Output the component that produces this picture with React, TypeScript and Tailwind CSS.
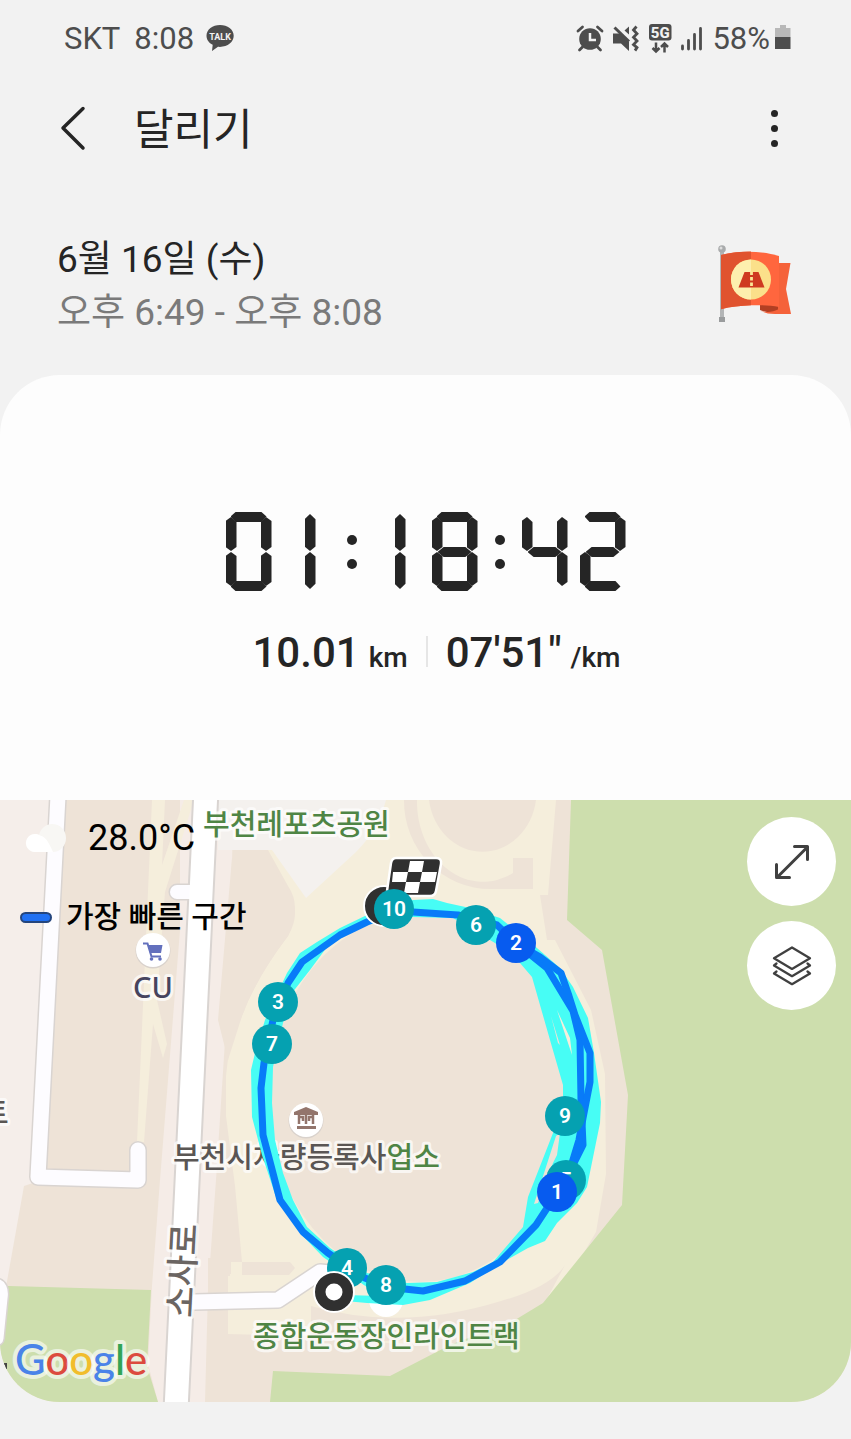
import React from "react";

const SEGMENTS: Record<string, string> = {
  a: "left-[5px] top-0 h-[10px] w-9 [clip-path:polygon(0_45%,14%_0,86%_0,100%_45%,86%_100%,14%_100%)]",
  b: "left-[35px] top-[5px] h-[34px] w-[11px] [clip-path:polygon(50%_0,100%_12%,100%_88%,50%_100%,0_88%,0_15%)]",
  c: "left-[35px] top-10 h-[34px] w-[11px] [clip-path:polygon(50%_0,100%_12%,100%_88%,50%_100%,0_85%,0_12%)]",
  d: "bottom-0 left-[5px] h-[10px] w-9 [clip-path:polygon(0_55%,14%_0,86%_0,100%_55%,86%_100%,14%_100%)]",
  e: "left-0 top-10 h-[34px] w-[11px] [clip-path:polygon(50%_0,100%_12%,100%_85%,50%_100%,0_88%,0_12%)]",
  f: "left-0 top-[5px] h-[34px] w-[11px] [clip-path:polygon(50%_0,100%_15%,100%_88%,50%_100%,0_88%,0_12%)]",
  g: "left-[6px] top-[35px] h-[10px] w-[34px] [clip-path:polygon(0_50%,18%_0,82%_0,100%_50%,82%_100%,18%_100%)]",
  m: "left-[21px] top-[2px] h-[37px] w-[11px] [clip-path:polygon(50%_0,100%_14%,100%_88%,50%_100%,0_88%,0_14%)]",
  n: "left-[21px] top-10 h-[37px] w-[11px] [clip-path:polygon(50%_0,100%_12%,100%_86%,50%_100%,0_86%,0_12%)]",
};

const LIT: Record<string, string> = {
  "0": "abcdef",
  "1": "mn",
  "2": "abged",
  "4": "fgbc",
  "8": "abcdefg",
};

function Digit({ value }: { value: string }) {
  return (
    <span className="relative block h-[79px] w-[46px]">
      {LIT[value].split("").map((s) => (
        <span key={s} className={`absolute bg-[#252525] ${SEGMENTS[s]}`} />
      ))}
    </span>
  );
}

function Colon() {
  return (
    <span className="flex w-11 flex-col items-center gap-[14px]">
      <span className="size-[10px] rounded-full bg-[#252525]" />
      <span className="size-[10px] rounded-full bg-[#252525]" />
    </span>
  );
}

function Timer({ value }: { value: string }) {
  const parts = value.split(":");
  return (
    <div role="timer" aria-label={value} className="flex items-center justify-center">
      {parts.map((p, i) => (
        <React.Fragment key={i}>
          {i > 0 && <Colon />}
          <span className="flex gap-3">
            {p.split("").map((d, j) => (
              <Digit key={j} value={d} />
            ))}
          </span>
        </React.Fragment>
      ))}
    </div>
  );
}

function StatusBar() {
  return (
    <div className="flex h-[78px] items-center justify-between pr-[59px] pl-16 text-[31px] text-[#4d4d4d]">
      <div className="flex items-center">
        <span>SKT</span>
        <span className="ml-[14px]">8:08</span>
        <svg className="ml-3 h-7 w-7" viewBox="0 0 28 28">
          <path d="M14 0C6.500 0 .5 4.500 .5 10.800c0 4 2.500 7.300 6.200 9L6 26l6-4.200c9 .8 15.700-4.500 15.700-11C27.700 4.500 21.500 0 14 0z" fill="#4d4d4d" />
          <text x="14" y="14.500" textAnchor="middle" className="fill-[#f2f2f2] text-[9px] font-bold">TALK</text>
        </svg>
      </div>
      <div className="flex items-center">
        <svg className="h-7 w-7" viewBox="0 0 28 28">
          <circle cx="14" cy="14" r="10.800" fill="#4d4d4d" />
          <path d="M2 6l4.500-4M26 6l-4.500-4M6.500 22l-3 3M21.500 22l3 3" stroke="#4d4d4d" strokeWidth="2.800" strokeLinecap="round" />
          <path d="M14 8v7h6" stroke="#f2f2f2" strokeWidth="2.500" fill="none" />
        </svg>
        <svg className="ml-2 h-7 w-7" viewBox="0 0 28 28">
          <path d="M1 8.500h7L17 17v9l-8-7.500H1zM17 1.500v8L12.500 5.500z" fill="#4d4d4d" />
          <path d="M2.500 2.500L17 16.500" stroke="#4d4d4d" strokeWidth="3" />
          <path d="M24.500 1.500l-3 3.500 3.500 3.700-3.500 3.600 3.500 3.700-3.500 3.600 3.500 3-2 3" stroke="#4d4d4d" strokeWidth="2.800" fill="none" />
        </svg>
        <svg className="ml-2 h-8 w-6" viewBox="0 -3 24 32">
          <rect x="1" y="-2" width="22.500" height="16.500" rx="3" fill="#4d4d4d" />
          <text x="12.200" y="11.500" textAnchor="middle" className="fill-[#f2f2f2] text-[15px] font-extrabold">5G</text>
          <path d="M8 16.500v9M4.500 22L8 25.500l3.500-3.500M16.500 26.500v-9M13 21l3.500-3.500L20 21" stroke="#4d4d4d" strokeWidth="2.500" fill="none" />
        </svg>
        <svg className="ml-2 h-7 w-6" viewBox="0 0 24 28">
          <path d="M2.500 21v3M8.500 15.500V24M14.500 9.500V24M20.500 3.500V24" stroke="#4d4d4d" strokeWidth="2.800" strokeLinecap="round" />
        </svg>
        <span className="ml-2">58%</span>
        <svg className="ml-1 h-7 w-[18px]" viewBox="0 0 18 28">
          <path d="M6 0h6v3h4.500v9H1V3h5z" fill="#b8b8b8" />
          <path d="M1 12h15.500v12H1z" fill="#4d4d4d" />
        </svg>
      </div>
    </div>
  );
}

function FlagBadge() {
  return (
    <svg className="h-[78px] w-[76px]" viewBox="0 0 76 78" role="img" aria-label="거리 목표">
      <rect x="3" y="7" width="4" height="66" fill="#b3b5b6" />
      <circle cx="5" cy="4" r="3.800" fill="#a9abac" />
      <circle cx="4" cy="3" r="1.500" fill="#dedede" />
      <rect x="2" y="72" width="6" height="5" fill="#9a9c9d" />
      <path d="M43 57h19v11c-8 0-14-1-19-3z" fill="#b23f23" />
      <path d="M44 66c6 2 12 1 18-2v5H58c-6 0-10-1-14-3z" fill="#f5623a" />
      <path d="M61 18h12.500l-4.500 26 5 25H61z" fill="#f5623a" />
      <path d="M4 10c17-4.500 40-4.500 58 1v51c-8-1.600-18-2-28-1.800-10 .3-21 1.500-30 4z" fill="#ff663e" />
      <path d="M4 10c10-2.700 20-3.600 30-3.600v53.800c-10 .3-21 1.500-30 4z" fill="#e0532f" />
      <circle cx="34" cy="34.500" r="20" fill="#fbe08a" />
      <path d="M34 14.500a20 20 0 0 0 0 40z" fill="#fdefae" />
      <path d="M27.500 27h14l6 15.500H21.500z" fill="#cf3a20" />
      <path d="M34.500 26.500v16" stroke="#fbe795" strokeWidth="2.800" strokeDasharray="3.500 2" />
    </svg>
  );
}

const MARKERS = [
  { n: "6", x: 476, y: 925, c: "#05a1b1" },
  { n: "2", x: 516, y: 943, c: "#075bef" },
  { n: "3", x: 278, y: 1002, c: "#05a1b1" },
  { n: "7", x: 272, y: 1044, c: "#05a1b1" },
  { n: "9", x: 565, y: 1116, c: "#05a1b1" },
  { n: "5", x: 566, y: 1180, c: "#05a1b1" },
  { n: "1", x: 557, y: 1192, c: "#075bef" },
  { n: "4", x: 347, y: 1268, c: "#05a1b1" },
  { n: "8", x: 386, y: 1285, c: "#05a1b1" },
];

function Marker({ n, x, y, c }: { n: string; x: number; y: number; c: string }) {
  return (
    <g>
      <circle cx={x} cy={y} r="20" fill={c} />
      <text x={x} y={y + 7} textAnchor="middle" className="fill-white text-[21px] font-semibold">{n}</text>
    </g>
  );
}

const labelClass = "font-medium stroke-white/70 stroke-[6px] [paint-order:stroke] [stroke-linejoin:round]";

function RouteMap() {
  return (
    <svg className="block w-full" viewBox="0 800 851 602" role="img" aria-label="달리기 경로 지도">
      <rect y="800" width="851" height="602" fill="#eee3d7" />
      {/* street-side ground */}
      <path d="M0 800h52L36 1182l-12 4L6 1287H0z" fill="#f5eeea" />
      <path d="M180 800h14l-28 602h-8l-10-38 4-78 8-106 20-250z" fill="#f5ece7" />
      <path d="M217 800h17l-7 210-11 170-8 110-3 112h-18z" fill="#f5ece7" />
      {/* footpaths */}
      <path d="M152 800h13l-3 65 22-65h10l-29 92-8 108 10 44-4 14-10-34-9 118h-7z" fill="#f5eedc" />
      {/* stadium grounds */}
      <path d="M232 850h36l20 36q14 20 0 50-32 42-46 80-14 30-16 60v40l9 70 7 76h-12v14h-2v58l80 2 90 8 122-14 42-40 34-58 10-58-1-100-14-64-36-70h-8l-7-45h8l8-95H218v50z" fill="#f5eedc" />
      <path d="M232 858h36l20 34q14 20 0 44-32 42-46 80l-14 44-10-40z" fill="#eee3d7" />
      <path d="M218 800h168q-8 30-30 52l-50 46-34-48h-54z" fill="#f4f1ee" />
      <path d="M404 800h13a66 80 0 0 0 96 73v-15h20v31h-42a86 88 0 0 1-87-89z" fill="#eee3d7" />
      <path d="M429 800h107a54 60 0 0 1-107 0z" fill="#eee3d7" />
      <path d="M242 1262h48l5 6-6 7h-47z" fill="#eee3d7" />
      <path d="M208 1258h23v16h-3v58h-20z" fill="#eee3d7" />
      <path d="M311 1306q90 26 190-5 50-14 64-36l-24 45-40 25-190 10z" fill="#eee3d7" />
      <ellipse cx="420" cy="1098" rx="152" ry="184" fill="#eee3d7" />
      {/* parks */}
      <path d="M571 800h280v602H270l3-31 117 5 60-31 65-25 28-17 79-98 6-110-26-145-35-30z" fill="#cddead" />
      <path d="M9 1286l142 4-4 76 11 36H0v-116z" fill="#cddead" />
      {/* roads */}
      <g fill="none" strokeLinecap="round" strokeLinejoin="round">
        <path d="M58 796L38 1177l100 3v-30" stroke="#d9d4d1" strokeWidth="18" />
        <path d="M177 892h26" stroke="#d9d4d1" strokeWidth="17" />
        <path d="M194 1302l84-2 42-28 30 3" stroke="#d9d4d1" strokeWidth="18" />
        <path d="M206 790L176 1410" stroke="#d9d4d1" strokeWidth="27" />
        <path d="M-6 1286q8 0 6 12l-4 40" stroke="#d9d4d1" strokeWidth="18" />
        <path d="M58 796L38 1177l100 3v-30" stroke="#fdfcff" strokeWidth="15" />
        <path d="M177 892h26" stroke="#fdfcff" strokeWidth="14" />
        <path d="M194 1302l84-2 42-28 30 3" stroke="#fdfcff" strokeWidth="15" />
        <path d="M206 790L176 1410" stroke="#fff" strokeWidth="23" />
        <path d="M-6 1286q8 0 6 12l-4 40" stroke="#fdfcff" strokeWidth="15" />
      </g>

      {/* places */}
      <g className={labelClass}>
        <text x="203" y="835" className="fill-[#4f8545] text-[29px]">부천레포츠공원</text>
        <text x="133" y="998" className="fill-[#46445e] font-['Noto_Sans'] text-[29px]">CU</text>
        <text x="173" y="1168" className="text-[29px]">
          <tspan className="fill-[#5a5654]">부천시차량등록사</tspan>
          <tspan className="fill-[#4f8545]">업소</tspan>
        </text>
        <text x="253" y="1347" className="fill-[#4f8545] text-[29px]">종합운동장인라인트랙</text>
        <text x="-18" y="1124" className="fill-[#5a5654] text-[29px]">트</text>
        <text transform="translate(192 1318) rotate(-87)" className="fill-[#6b6562] text-[34px]">소사로</text>
      </g>
      <path d="M4 1364h2v5" stroke="#444" strokeWidth="2" fill="none" />
      <circle cx="153" cy="951" r="17.500" fill="#d9d2cc" />
      <circle cx="153" cy="950" r="17" fill="#fff" />
      <path d="M143 943.500h4.500l4 13h9.500" stroke="#6370bd" strokeWidth="2" fill="none" />
      <path d="M148 945h14.500l-1.500 8h-11z" fill="#6370bd" />
      <circle cx="151.500" cy="959" r="1.800" fill="#6370bd" />
      <circle cx="160" cy="959" r="1.800" fill="#6370bd" />
      <circle cx="306" cy="1121" r="17.500" fill="#d9d2cc" />
      <circle cx="306" cy="1120" r="17" fill="#fff" />
      <path d="M294 1112l12-5 12 5v3h-24zM297 1126h19v3h-19z" fill="#93756c" />
      <path d="M299 1115v9M306 1115v9M313 1115v9M298 1117h5v4M314 1117h-5v4" stroke="#93756c" strokeWidth="2.500" fill="none" />
      <circle cx="386" cy="1300" r="17" fill="#fff" />

      {/* recorded track */}
      <path
        fillRule="evenodd"
        fill="#47fdf5"
        d="M393 905L413 900L433 899L447 903L470 908L500 918L530 942L560 968L573 987L588 1018L594 1053L601 1102L600 1123L587 1187L577 1203L557 1223L545 1241L528 1248L503 1262L470 1283L430 1300L403 1305L367 1303L345 1301L345 1295L380 1296L345 1272L323 1257L300 1233L277 1200L262 1155L252 1117L251 1070L255 1053L265 1020L287 973L300 953L317 942L340 928L367 915ZM393 918L367 925L350 932L327 947L310 970L292 993L283 1023L273 1067L272 1103L275 1140L283 1173L293 1200L307 1227L330 1248L367 1273L407 1283L437 1282L473 1272L493 1262L523 1227L525 1215L528 1197L553 1133L563 1100L563 1085L550 1040L532 977L520 963L495 943L453 918L413 917ZM557 1010L570 1038L572 1055ZM551 1016L560 1045L558 1043ZM556 1136L560 1133L557 1155L553 1163L538 1203L534 1204ZM578 1164L581 1169L577 1168Z"
      />
      <g fill="none" stroke="#087bf8" strokeWidth="7" strokeLinejoin="round">
        <path d="M393 912H413L458 915L497 925L516 943L547 968L573 1011L580 1040L581 1100L583 1145L573 1165L557 1193L536 1225L500 1262L465 1281L423 1291L386 1287L365 1278L328 1253L303 1232L280 1200L263 1135L261 1088L264 1063L273 1020L288 983L302 962L340 935L367 922Z" />
        <path d="M516 943L540 957L561 973L569 996L575 1015L590 1053V1082L583 1118L579 1140L572 1163" />
      </g>

      {/* split markers */}
      <circle cx="384" cy="906" r="20" fill="#303030" stroke="#fff" strokeWidth="2" />
      <path d="M396 858h40q6 0 5 6l-5 27q-1 5-6 5h-39q-5 0-4-5l4-28q1-5 5-5z" fill="#303030" stroke="#fff" strokeWidth="2.500" />
      <path d="M410 861h14l-2 11h-14zM393 872h15l-2 10h-14zM422 872h15l-2 10h-15zM406 882h14l-2 11h-14z" fill="#fff" />
      <Marker n="10" x={394} y={909} c="#05a1b1" />
      {MARKERS.map((m) => (
        <Marker key={m.n} {...m} />
      ))}
      <circle cx="334" cy="1292" r="20" fill="#303030" stroke="#fff" strokeWidth="2" />
      <circle cx="334" cy="1292" r="8.500" fill="#fff" />

      <text x="15" y="1375" className="stroke-white/60 stroke-[8px] font-['Lato'] text-[42px] font-medium [paint-order:stroke] [stroke-linejoin:round]">
        <tspan fill="#4a83e8">G</tspan>
        <tspan fill="#dc4b3e">o</tspan>
        <tspan fill="#f1bd2c">o</tspan>
        <tspan fill="#4a83e8">g</tspan>
        <tspan fill="#33a455">l</tspan>
        <tspan fill="#dc4b3e">e</tspan>
      </text>
    </svg>
  );
}

export default function App() {
  return (
    <main className="min-h-screen bg-[#f2f2f2] pb-[37px] font-['Roboto','Noto_Sans_CJK_KR',sans-serif] text-[#252525]">
      <StatusBar />
      <header className="flex h-[100px] items-center justify-between pr-[59px] pl-[54px]">
        <div className="flex items-center">
          <button type="button" aria-label="뒤로" className="flex h-12 w-10 items-center justify-center">
            <svg className="h-12 w-10" viewBox="0 0 40 48" fill="none" stroke="#252525" strokeWidth="3.500" strokeLinecap="round" strokeLinejoin="round">
              <path d="M29 4.500L9 24l20 20" />
            </svg>
          </button>
          <h1 className="ml-10 pt-1 text-[43px] leading-[52px]">달리기</h1>
        </div>
        <button type="button" aria-label="옵션 더보기" className="flex h-12 w-9 flex-col items-center justify-center gap-2">
          <span className="size-[7px] rounded-full bg-[#252525]" />
          <span className="size-[7px] rounded-full bg-[#252525]" />
          <span className="size-[7px] rounded-full bg-[#252525]" />
        </button>
      </header>
      <section className="flex items-start justify-between pt-[55px] pr-[58px] pb-9 pl-[57px] text-[37px] leading-[53px]">
        <div>
          <p>6월 16일 (수)</p>
          <p className="text-[#7a7a7a]">오후 6:49 - 오후 8:08</p>
        </div>
        <div className="pt-3">
          <FlagBadge />
        </div>
      </section>
      <section className="overflow-hidden rounded-[60px] bg-[#fdfdfd]">
        <div className="pt-[137px] pb-[121px]">
          <Timer value="01:18:42" />
          <div className="mt-[35px] flex items-baseline justify-center pl-[22px] font-medium">
            <span className="text-[42px] leading-[53px]">10.01</span>
            <span className="ml-[9px] text-[28px]">km</span>
            <span className="mx-[18px] h-[31px] w-[2px] bg-[#e6e6e6]" />
            <span className="text-[42px] leading-[53px]">07&apos;51&quot;</span>
            <span className="ml-[9px] text-[28px]">/km</span>
          </div>
        </div>
        <div className="relative">
          <RouteMap />
          <div className="absolute top-4 left-5 flex flex-col gap-[37px] text-black">
            <div className="flex items-center">
              <svg className="ml-1 h-9 w-11" viewBox="0 0 44 36">
                <path d="M11 32a9 9 0 1 1 4-17C17 8 22 4 28 4c8 0 14 6 14 14s-6 14-13 14z" fill="#f8f7f4" />
                <path d="M11 32a9 9 0 1 1 5-16.500c5 1 8 5 13 16.500z" fill="#fff" />
              </svg>
              <span className="ml-5 text-[36px] leading-[44px]">28.0°C</span>
            </div>
            <div className="flex items-center">
              <span className="h-[11px] w-8 rounded-full border-2 border-[#24457d] bg-[#2070f2]" />
              <span className="ml-[14px] text-[30px] leading-[40px] font-medium">가장 빠른 구간</span>
            </div>
          </div>
          <div className="absolute top-[17px] right-[15px] flex flex-col gap-[15px]">
            <button type="button" aria-label="지도 확대" className="flex size-[89px] items-center justify-center rounded-full bg-white">
              <svg className="size-10" viewBox="0 0 40 40" fill="none" stroke="#404040" strokeWidth="3" strokeLinecap="round" strokeLinejoin="round">
                <path d="M5 35.500L35.500 5M22.500 4.500h13v13M4.500 22.500v13h13" />
              </svg>
            </button>
            <button type="button" aria-label="지도 종류" className="flex size-[89px] items-center justify-center rounded-full bg-white">
              <svg className="size-10" viewBox="0 0 40 40" fill="none" stroke="#404040" strokeWidth="2.300" strokeLinecap="round" strokeLinejoin="round">
                <path d="M20 1.500l18 10.700-18 10.700L2 12.200z" />
                <path d="M4.500 17.500L2 19.500l18 10.700 18-10.700-2.500-2M4.500 25.500L2 27.500l18 10.700 18-10.700-2.500-2" />
              </svg>
            </button>
          </div>
        </div>
      </section>
    </main>
  );
}
